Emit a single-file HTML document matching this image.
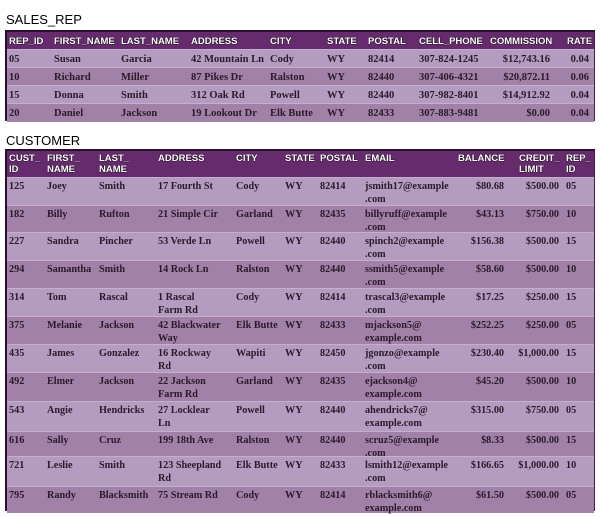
<!DOCTYPE html>
<html><head><meta charset="utf-8"><style>
body{margin:0;width:600px;height:517px;background:#fff;position:relative;overflow:hidden;font-family:"Liberation Serif",serif;}
.t{position:absolute;font-family:"Liberation Sans",sans-serif;font-size:13px;color:#000;}
.tb{position:absolute;left:5px;width:590px;border:1px solid #4a1f52;border-top:2px solid #2a0f30;border-left:2px solid #2a0f30;box-sizing:border-box;}
.r{position:absolute;left:0;right:0;}
.h{background:#652b6d;color:#fff;font-family:"Liberation Sans",sans-serif;font-weight:bold;font-size:9.5px;text-shadow:0 0 1px #000,0 0 1px #000;}
.l{background:#b39cc0;}
.d{background:#a281a9;}
.r span{position:absolute;white-space:nowrap;}
.s .r span{top:4px;}
.s .l,.s .d{font-size:10.5px;font-weight:bold;color:#2a1a2a;border-top:1px solid #c4b0cc;}
.c .l,.c .d{font-size:10.2px;font-weight:bold;color:#2a1a2a;line-height:12.5px;border-top:1px solid #c4b0cc;}
.c .r span{top:3px;}
.c .h span{top:2px;line-height:11px;}
</style></head><body>
<div class="t" style="left:6px;top:12px;">SALES_REP</div>
<div class="tb s" style="top:30px;height:91px;">
<div class="r h" style="top:0;height:17px;"><span style="left:2px">REP_ID</span><span style="left:47px">FIRST_NAME</span><span style="left:114px">LAST_NAME</span><span style="left:184px">ADDRESS</span><span style="left:263px">CITY</span><span style="left:320px">STATE</span><span style="left:361px">POSTAL</span><span style="left:412px">CELL_PHONE</span><span style="left:483px">COMMISSION</span><span style="left:560px">RATE</span></div>
<div class="r l" style="top:17px;height:18px;"><span style="left:2px">05</span><span style="left:47px">Susan</span><span style="left:114px">Garcia</span><span style="left:184px">42 Mountain Ln</span><span style="left:263px">Cody</span><span style="left:320px">WY</span><span style="left:361px">82414</span><span style="left:412px">307-824-1245</span><span style="right:44px">$12,743.16</span><span style="right:5px">0.04</span></div>
<div class="r d" style="top:35px;height:18px;"><span style="left:2px">10</span><span style="left:47px">Richard</span><span style="left:114px">Miller</span><span style="left:184px">87 Pikes Dr</span><span style="left:263px">Ralston</span><span style="left:320px">WY</span><span style="left:361px">82440</span><span style="left:412px">307-406-4321</span><span style="right:44px">$20,872.11</span><span style="right:5px">0.06</span></div>
<div class="r l" style="top:53px;height:18px;"><span style="left:2px">15</span><span style="left:47px">Donna</span><span style="left:114px">Smith</span><span style="left:184px">312 Oak Rd</span><span style="left:263px">Powell</span><span style="left:320px">WY</span><span style="left:361px">82440</span><span style="left:412px">307-982-8401</span><span style="right:44px">$14,912.92</span><span style="right:5px">0.04</span></div>
<div class="r d" style="top:71px;height:18px;"><span style="left:2px">20</span><span style="left:47px">Daniel</span><span style="left:114px">Jackson</span><span style="left:184px">19 Lookout Dr</span><span style="left:263px">Elk Butte</span><span style="left:320px">WY</span><span style="left:361px">82433</span><span style="left:412px">307-883-9481</span><span style="right:44px">$0.00</span><span style="right:5px">0.04</span></div>
</div>

<div class="t" style="left:6px;top:133px;">CUSTOMER</div>
<div class="tb c" style="top:149px;height:362px;">
<div class="r h" style="top:0;height:26px;"><span style="left:2px">CUST_<br>ID</span><span style="left:40px">FIRST_<br>NAME</span><span style="left:92px">LAST_<br>NAME</span><span style="left:151px">ADDRESS</span><span style="left:229px">CITY</span><span style="left:278px">STATE</span><span style="left:313px">POSTAL</span><span style="left:358px">EMAIL</span><span style="left:451px">BALANCE</span><span style="left:512px">CREDIT_<br>LIMIT</span><span style="left:559px">REP_<br>ID</span></div>

<div class="r l" style="top:26px;height:28px;"><span style="left:2px">125</span><span style="left:40px">Joey</span><span style="left:92px">Smith</span><span style="left:151px">17 Fourth St</span><span style="left:229px">Cody</span><span style="left:278px">WY</span><span style="left:313px">82414</span><span style="left:358px">jsmith17@example<br>.com</span><span style="right:90px">$80.68</span><span style="right:35px">$500.00</span><span style="left:559px">05</span></div>
<div class="r d" style="top:54px;height:27px;"><span style="left:2px">182</span><span style="left:40px">Billy</span><span style="left:92px">Rufton</span><span style="left:151px">21 Simple Cir</span><span style="left:229px">Garland</span><span style="left:278px">WY</span><span style="left:313px">82435</span><span style="left:358px">billyruff@example<br>.com</span><span style="right:90px">$43.13</span><span style="right:35px">$750.00</span><span style="left:559px">10</span></div>
<div class="r l" style="top:81px;height:28px;"><span style="left:2px">227</span><span style="left:40px">Sandra</span><span style="left:92px">Pincher</span><span style="left:151px">53 Verde Ln</span><span style="left:229px">Powell</span><span style="left:278px">WY</span><span style="left:313px">82440</span><span style="left:358px">spinch2@example<br>.com</span><span style="right:90px">$156.38</span><span style="right:35px">$500.00</span><span style="left:559px">15</span></div>
<div class="r d" style="top:109px;height:28px;"><span style="left:2px">294</span><span style="left:40px">Samantha</span><span style="left:92px">Smith</span><span style="left:151px">14 Rock Ln</span><span style="left:229px">Ralston</span><span style="left:278px">WY</span><span style="left:313px">82440</span><span style="left:358px">ssmith5@example<br>.com</span><span style="right:90px">$58.60</span><span style="right:35px">$500.00</span><span style="left:559px">10</span></div>
<div class="r l" style="top:137px;height:28px;"><span style="left:2px">314</span><span style="left:40px">Tom</span><span style="left:92px">Rascal</span><span style="left:151px">1 Rascal<br>Farm Rd</span><span style="left:229px">Cody</span><span style="left:278px">WY</span><span style="left:313px">82414</span><span style="left:358px">trascal3@example<br>.com</span><span style="right:90px">$17.25</span><span style="right:35px">$250.00</span><span style="left:559px">15</span></div>
<div class="r d" style="top:165px;height:28px;"><span style="left:2px">375</span><span style="left:40px">Melanie</span><span style="left:92px">Jackson</span><span style="left:151px">42 Blackwater<br>Way</span><span style="left:229px">Elk Butte</span><span style="left:278px">WY</span><span style="left:313px">82433</span><span style="left:358px">mjackson5@<br>example.com</span><span style="right:90px">$252.25</span><span style="right:35px">$250.00</span><span style="left:559px">05</span></div>
<div class="r l" style="top:193px;height:28px;"><span style="left:2px">435</span><span style="left:40px">James</span><span style="left:92px">Gonzalez</span><span style="left:151px">16 Rockway<br>Rd</span><span style="left:229px">Wapiti</span><span style="left:278px">WY</span><span style="left:313px">82450</span><span style="left:358px">jgonzo@example<br>.com</span><span style="right:90px">$230.40</span><span style="right:35px">$1,000.00</span><span style="left:559px">15</span></div>
<div class="r d" style="top:221px;height:29px;"><span style="left:2px">492</span><span style="left:40px">Elmer</span><span style="left:92px">Jackson</span><span style="left:151px">22 Jackson<br>Farm Rd</span><span style="left:229px">Garland</span><span style="left:278px">WY</span><span style="left:313px">82435</span><span style="left:358px">ejackson4@<br>example.com</span><span style="right:90px">$45.20</span><span style="right:35px">$500.00</span><span style="left:559px">10</span></div>
<div class="r l" style="top:250px;height:30px;"><span style="left:2px">543</span><span style="left:40px">Angie</span><span style="left:92px">Hendricks</span><span style="left:151px">27 Locklear<br>Ln</span><span style="left:229px">Powell</span><span style="left:278px">WY</span><span style="left:313px">82440</span><span style="left:358px">ahendricks7@<br>example.com</span><span style="right:90px">$315.00</span><span style="right:35px">$750.00</span><span style="left:559px">05</span></div>
<div class="r d" style="top:280px;height:25px;"><span style="left:2px">616</span><span style="left:40px">Sally</span><span style="left:92px">Cruz</span><span style="left:151px">199 18th Ave</span><span style="left:229px">Ralston</span><span style="left:278px">WY</span><span style="left:313px">82440</span><span style="left:358px">scruz5@example<br>.com</span><span style="right:90px">$8.33</span><span style="right:35px">$500.00</span><span style="left:559px">15</span></div>
<div class="r l" style="top:305px;height:30px;"><span style="left:2px">721</span><span style="left:40px">Leslie</span><span style="left:92px">Smith</span><span style="left:151px">123 Sheepland<br>Rd</span><span style="left:229px">Elk Butte</span><span style="left:278px">WY</span><span style="left:313px">82433</span><span style="left:358px">lsmith12@example<br>.com</span><span style="right:90px">$166.65</span><span style="right:35px">$1,000.00</span><span style="left:559px">10</span></div>
<div class="r d" style="top:335px;height:26px;"><span style="left:2px">795</span><span style="left:40px">Randy</span><span style="left:92px">Blacksmith</span><span style="left:151px">75 Stream Rd</span><span style="left:229px">Cody</span><span style="left:278px">WY</span><span style="left:313px">82414</span><span style="left:358px">rblacksmith6@<br>example.com</span><span style="right:90px">$61.50</span><span style="right:35px">$500.00</span><span style="left:559px">05</span></div>
</div>
</body></html>
